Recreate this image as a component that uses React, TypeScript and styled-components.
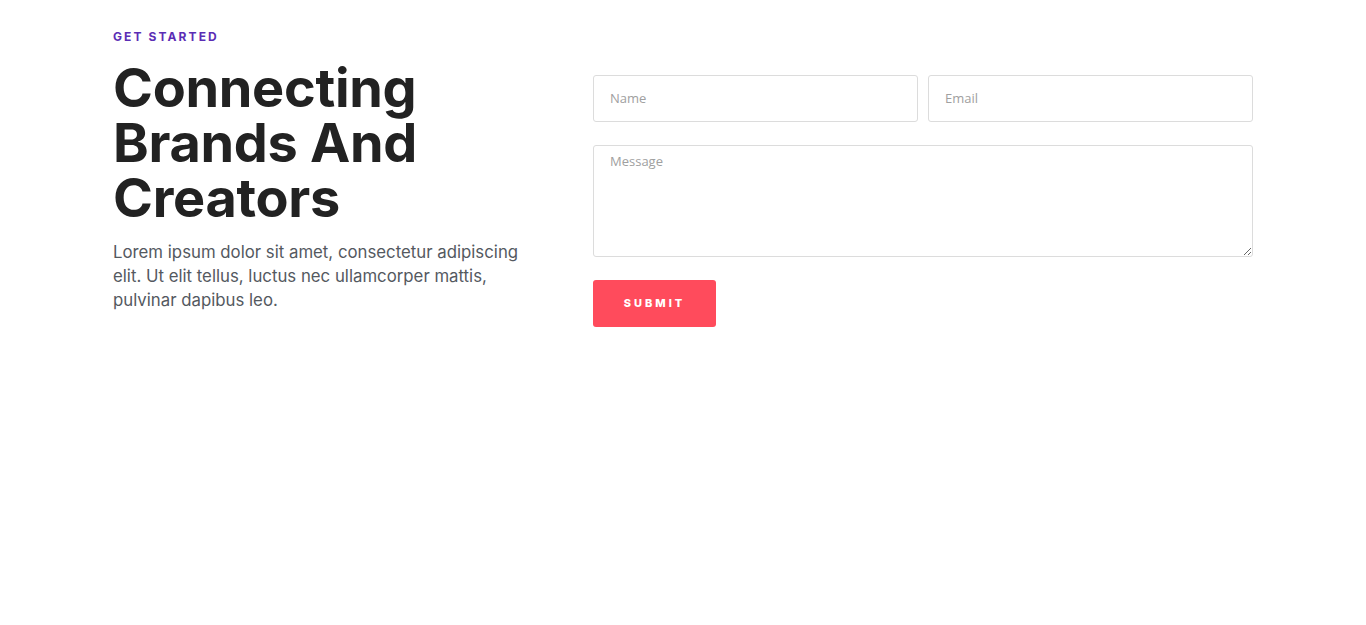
import React from 'react';
import styled, { createGlobalStyle } from 'styled-components';

const GlobalStyle = createGlobalStyle`
  body {
    margin: 0;
    background: #fff;
    font-family: Inter, "Noto Sans", sans-serif;
  }
  * {
    box-sizing: border-box;
  }
`;

const Page = styled.div`
  width: 1366px;
  height: 625px;
  background: #fff;
`;

const Container = styled.section`
  width: 1140px;
  margin: 0 auto;
  padding-top: 29px;
  display: grid;
  grid-template-columns: 480px 660px;
  align-items: start;
`;

const Intro = styled.div`
  display: flex;
  flex-direction: column;
`;

const Eyebrow = styled.span`
  color: #5b2db5;
  font-size: 12px;
  font-weight: 700;
  letter-spacing: 2.1px;
  line-height: 16px;
  text-transform: uppercase;
`;

const Heading = styled.h1`
  margin: 15px 0 0;
  color: #222;
  font-size: 54px;
  font-weight: 700;
  line-height: 55px;
  letter-spacing: -0.3px;
`;

const Lead = styled.p`
  margin: 15px 0 0;
  max-width: 430px;
  color: #54595f;
  font-size: 16.8px;
  line-height: 24px;
  font-weight: 400;
`;

const Form = styled.form`
  margin-top: 46px;
  display: flex;
  flex-direction: column;
  gap: 23px;
`;

const Row = styled.div`
  display: grid;
  grid-template-columns: 1fr 1fr;
  gap: 10px;
`;

const fieldBase = `
  width: 100%;
  border: 1px solid #dcdcdc;
  border-radius: 3px;
  background: #fff;
  color: #333;
  font-family: "Open Sans", sans-serif;
  font-size: 13px;
  padding: 0 16px;
  outline: none;
  &::placeholder {
    color: #a0a0a0;
  }
`;

const Input = styled.input`
  ${fieldBase}
  height: 47px;
  padding-bottom: 1px;
`;

const TextArea = styled.textarea`
  ${fieldBase}
  height: 112px;
  padding-top: 6px;
  resize: vertical;
  display: block;
`;

const SubmitButton = styled.button`
  width: 123px;
  height: 47px;
  border: none;
  border-radius: 3px;
  background: #ff4b5c;
  color: #fff;
  font-family: Inter, sans-serif;
  font-size: 11px;
  font-weight: 800;
  letter-spacing: 3px;
  text-transform: uppercase;
  padding: 0 0 2px;
  cursor: pointer;
`;

export default function App() {
  return (
    <Page>
      <GlobalStyle />
      <Container>
        <Intro>
          <Eyebrow>Get Started</Eyebrow>
          <Heading>
            Connecting
            <br />
            Brands And
            <br />
            Creators
          </Heading>
          <Lead>
            Lorem ipsum dolor sit amet, consectetur adipiscing elit. Ut elit tellus, luctus nec
            ullamcorper mattis, pulvinar dapibus leo.
          </Lead>
        </Intro>
        <Form onSubmit={e => e.preventDefault()}>
          <Row>
            <Input type="text" placeholder="Name" />
            <Input type="email" placeholder="Email" />
          </Row>
          <TextArea placeholder="Message" />
          <div>
            <SubmitButton type="submit">Submit</SubmitButton>
          </div>
        </Form>
      </Container>
    </Page>
  );
}
